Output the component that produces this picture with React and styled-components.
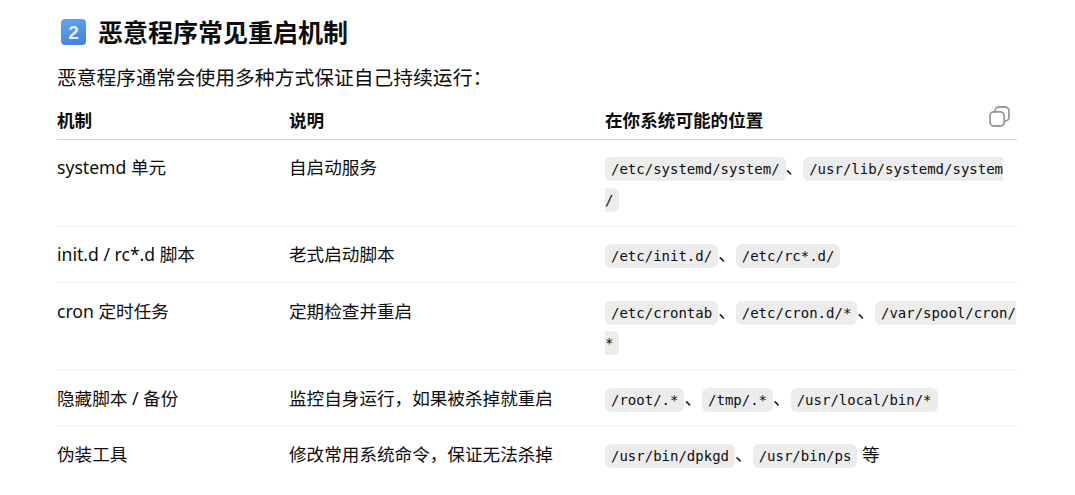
import React from "react";
import styled, { createGlobalStyle } from "styled-components";

const GlobalStyle = createGlobalStyle`
  html, body {
    margin: 0;
    padding: 0;
    background: #fff;
    overflow: hidden;
  }
  body {
    font-family: "Noto Sans", "Noto Sans CJK SC", sans-serif;
    color: #0d0d0d;
  }
`;

const Page = styled.div`
  width: 960px;
  padding: 13px 58px 0 57px;
`;

const Heading = styled.h3`
  display: flex;
  align-items: flex-start;
  gap: 12px;
  margin: 0 0 13px 4px;
  height: 36px;
  font-size: 25px;
  line-height: 36px;
  font-weight: 700;
  font-family: "Noto Sans CJK SC", sans-serif;
`;

const Keycap = styled.span`
  width: 25px;
  height: 26px;
  margin-top: 6px;
  border-radius: 4px;
  display: flex;
  align-items: center;
  justify-content: center;
  background: linear-gradient(160deg, #62a8ee, #3f7fdc);
  color: #e8eefc;
  font-family: "Liberation Sans", sans-serif;
  font-size: 19px;
  font-weight: 700;
  line-height: 1;
`;

const Intro = styled.p`
  margin: 0 0 13px;
  font-size: 19.8px;
  line-height: 30px;
  font-family: "Noto Sans CJK SC", sans-serif;
`;

const Table = styled.table`
  width: 960px;
  table-layout: fixed;
  border-collapse: collapse;
  font-size: 17.6px;
  line-height: 30.8px;
`;

const Head = styled.th`
  position: relative;
  padding: 0 0 3px;
  text-align: left;
  font-weight: 700;
  font-family: "Noto Sans CJK SC", sans-serif;
  border-bottom: 1px solid #d9d9d9;
`;

const CopyButton = styled.span`
  position: absolute;
  right: 7px;
  top: 1px;
  width: 21px;
  height: 21px;
  color: #9a9a9a;
  line-height: 0;
`;

const Row = styled.tr`
  border-bottom: 1px solid #f0f0f0;
  &:last-child {
    border-bottom: 0;
  }
`;

const Cell = styled.td`
  padding: 12.6px 0 11.8px;
  vertical-align: top;
`;

const Code = styled.code`
  font-family: "DejaVu Sans Mono", monospace;
  font-size: 14px;
  line-height: 24px;
  padding: 4px 6px;
  background: #ececec;
  border-radius: 6px;
  word-break: break-all;
  -webkit-box-decoration-break: slice;
  box-decoration-break: slice;
`;

const CopyIcon = () => (
  <svg width="21" height="21" viewBox="0 0 21 21" fill="none" stroke="currentColor" strokeWidth="1.8">
    <rect x="1" y="5.8" width="14.2" height="14.2" rx="4" />
    <path d="M6 5.8V5a4 4 0 0 1 4-4h6a4 4 0 0 1 4 4v6a4 4 0 0 1-4 4h-.8" />
  </svg>
);

const rows = [
  {
    name: "systemd 单元",
    desc: "自启动服务",
    paths: ["/etc/systemd/system/", "/usr/lib/systemd/system\u200B/"],
  },
  {
    name: "init.d / rc*.d 脚本",
    desc: "老式启动脚本",
    paths: ["/etc/init.d/", "/etc/rc*.d/"],
  },
  {
    name: "cron 定时任务",
    desc: "定期检查并重启",
    paths: ["/etc/crontab", "/etc/cron.d/*", "/var/spool/cron/*"],
  },
  {
    name: "隐藏脚本 / 备份",
    desc: "监控自身运行，如果被杀掉就重启",
    paths: ["/root/.*", "/tmp/.*", "/usr/local/bin/*"],
  },
  {
    name: "伪装工具",
    desc: "修改常用系统命令，保证无法杀掉",
    paths: ["/usr/bin/dpkgd", "/usr/bin/ps"],
    suffix: " 等",
  },
];

export default function App() {
  return (
    <Page>
      <GlobalStyle />
      <Heading>
        <Keycap>2</Keycap>
        恶意程序常见重启机制
      </Heading>
      <Intro>恶意程序通常会使用多种方式保证自己持续运行：</Intro>
      <Table>
        <colgroup>
          <col width="232" />
          <col width="316" />
          <col width="412" />
        </colgroup>
        <thead>
          <tr>
            <Head>机制</Head>
            <Head>说明</Head>
            <Head>
              在你系统可能的位置
              <CopyButton>
                <CopyIcon />
              </CopyButton>
            </Head>
          </tr>
        </thead>
        <tbody>
          {rows.map((row) => (
            <Row key={row.name}>
              <Cell>{row.name}</Cell>
              <Cell>{row.desc}</Cell>
              <Cell>
                {row.paths.map((path, index) => (
                  <React.Fragment key={path}>
                    {index > 0 && "、"}
                    <Code>{path}</Code>
                  </React.Fragment>
                ))}
                {row.suffix}
              </Cell>
            </Row>
          ))}
        </tbody>
      </Table>
    </Page>
  );
}
